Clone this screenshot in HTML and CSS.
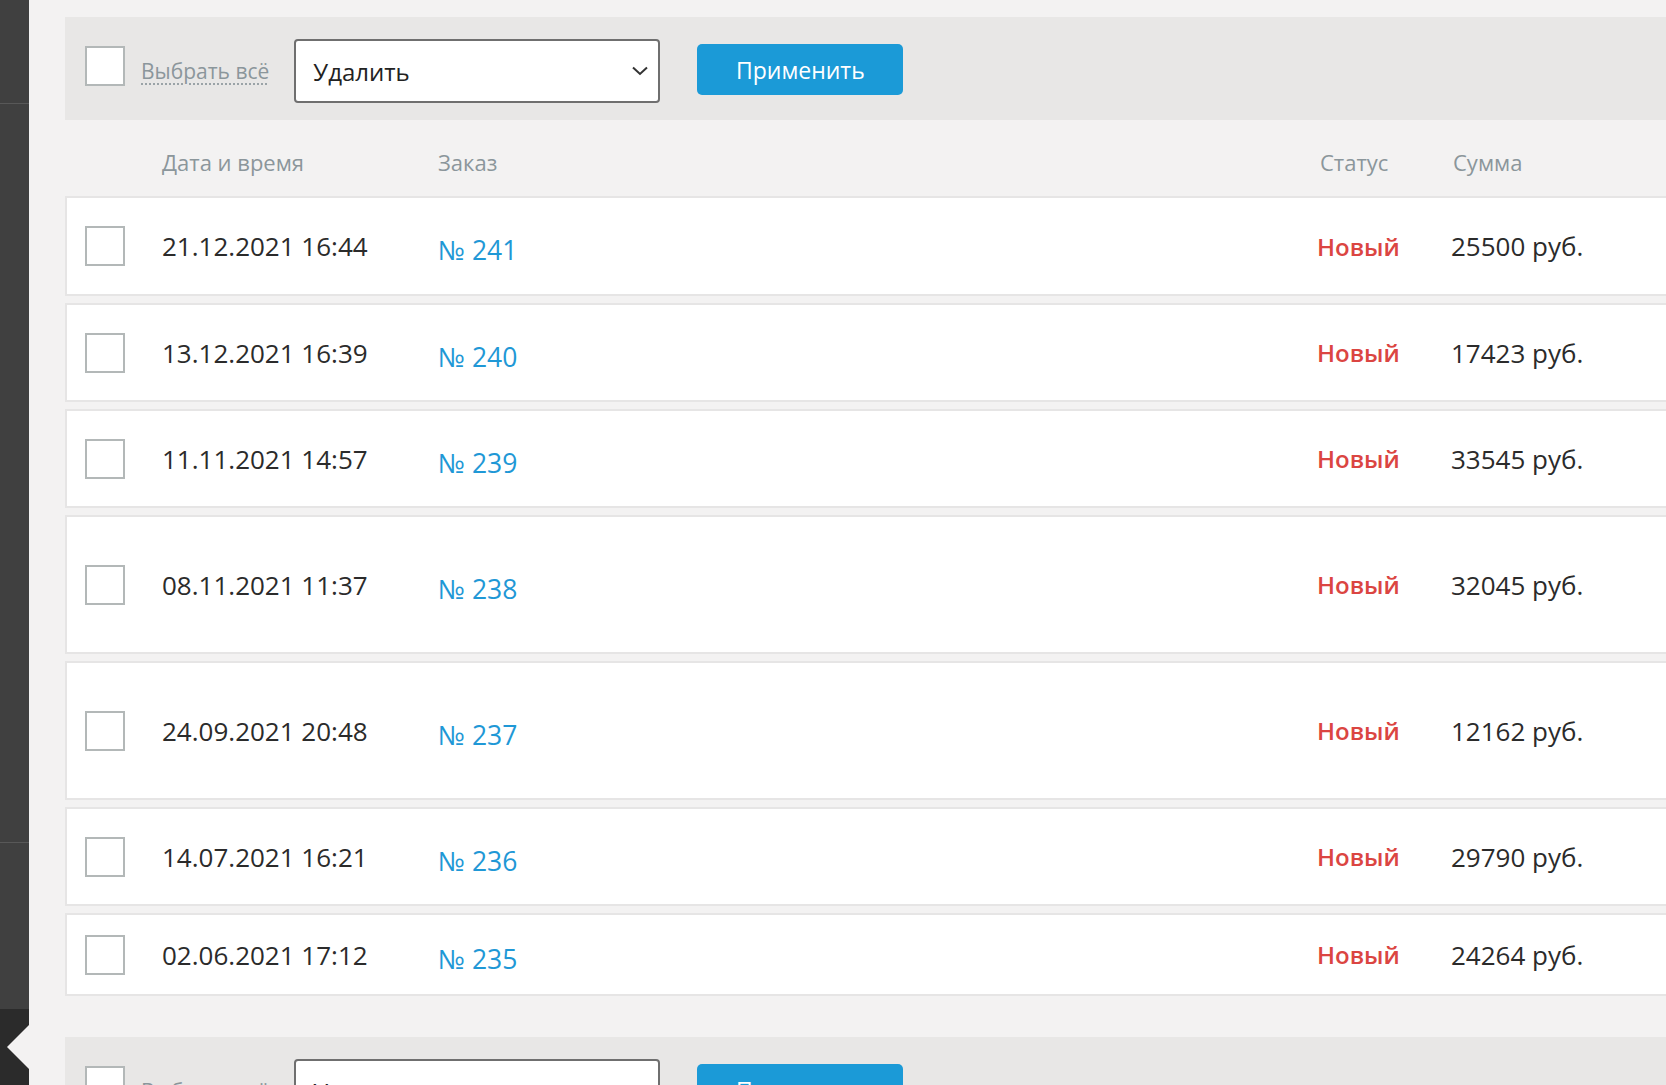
FILE: index.html
```html
<!DOCTYPE html>
<html lang="ru">
<head>
    <meta charset="UTF-8">
    <meta name="viewport" content="width=device-width, initial-scale=1.0">
    <title>Заказы</title>
    <link rel="stylesheet" href="styles.css">
</head>
<body>

<!-- Left admin sidebar (collapsed) -->
<div class="sidebar">
    <div class="sidebar-top"></div>
    <div class="sidebar-mid"></div>
    <div class="sidebar-low"></div>
    <div class="sidebar-bottom">
        <svg class="collapse-arrow" width="22" height="44" viewBox="0 0 22 44">
            <polygon points="22,0 0,22 22,44" fill="#f3f2f2"/>
        </svg>
    </div>
</div>

<div class="main">

    <!-- Bulk actions -->
    <div class="toolbar">
        <input type="checkbox" class="check toolbar-check">
        <span class="select-all">Выбрать всё</span>
        <div class="action-select">
            <span>Удалить</span>
            <svg width="16" height="10" viewBox="0 0 16 10">
                <polyline points="1,1.5 8,8 15,1.5" fill="none" stroke="#333" stroke-width="2"/>
            </svg>
        </div>
        <button class="apply-btn">Применить</button>
    </div>

    <div class="table-head">
        <span></span>
        <span>Дата и время</span>
        <span>Заказ</span>
        <span class="head-status">Статус</span>
        <span class="head-sum">Сумма</span>
    </div>

    <div class="orders">
        <div class="order-row">
            <input type="checkbox" class="check">
            <span class="date">21.12.2021 16:44</span>
            <a class="order-link" href="#">№ 241</a>
            <span class="status">Новый</span>
            <span class="sum">25500 руб.</span>
        </div>
        <div class="order-row">
            <input type="checkbox" class="check">
            <span class="date">13.12.2021 16:39</span>
            <a class="order-link" href="#">№ 240</a>
            <span class="status">Новый</span>
            <span class="sum">17423 руб.</span>
        </div>
        <div class="order-row">
            <input type="checkbox" class="check">
            <span class="date">11.11.2021 14:57</span>
            <a class="order-link" href="#">№ 239</a>
            <span class="status">Новый</span>
            <span class="sum">33545 руб.</span>
        </div>
        <div class="order-row order-row--tall">
            <input type="checkbox" class="check">
            <span class="date">08.11.2021 11:37</span>
            <a class="order-link" href="#">№ 238</a>
            <span class="status">Новый</span>
            <span class="sum">32045 руб.</span>
        </div>
        <div class="order-row order-row--tall">
            <input type="checkbox" class="check">
            <span class="date">24.09.2021 20:48</span>
            <a class="order-link" href="#">№ 237</a>
            <span class="status">Новый</span>
            <span class="sum">12162 руб.</span>
        </div>
        <div class="order-row">
            <input type="checkbox" class="check">
            <span class="date">14.07.2021 16:21</span>
            <a class="order-link" href="#">№ 236</a>
            <span class="status">Новый</span>
            <span class="sum">29790 руб.</span>
        </div>
        <div class="order-row order-row--short">
            <input type="checkbox" class="check">
            <span class="date">02.06.2021 17:12</span>
            <a class="order-link" href="#">№ 235</a>
            <span class="status">Новый</span>
            <span class="sum">24264 руб.</span>
        </div>
    </div>

    <!-- Bulk actions (bottom) -->
    <div class="toolbar toolbar--bottom">
        <input type="checkbox" class="check toolbar-check">
        <span class="select-all">Выбрать всё</span>
        <div class="action-select">
            <span>Удалить</span>
            <svg width="16" height="10" viewBox="0 0 16 10">
                <polyline points="1,1.5 8,8 15,1.5" fill="none" stroke="#333" stroke-width="2"/>
            </svg>
        </div>
        <button class="apply-btn">Применить</button>
    </div>

</div>

</body>
</html>
```

FILE: styles.css
```css
html,
body {
    margin: 0;
    height: 100%;
    overflow: hidden;
}

body {
    display: flex;
    font-family: "Open Sans", "Noto Sans", sans-serif;
    background: #f3f2f2;
    color: #2b2b2b;
}

/* sidebar */

.sidebar {
    width: 29px;
    flex-shrink: 0;
    display: flex;
    flex-direction: column;
    background: #404040;
}

.sidebar-top {
    height: 103px;
    border-bottom: 1px solid #585858;
}

.sidebar-mid {
    height: 738px;
    border-bottom: 1px solid #585858;
}

.sidebar-low {
    height: 166px;
}

.sidebar-bottom {
    flex: 1;
    background: #2b2b2b;
    display: flex;
    justify-content: flex-end;
    align-items: flex-start;
    padding-top: 16px;
}

.collapse-arrow {
    display: block;
}

/* main column */

.main {
    width: 1700px;
    flex-shrink: 0;
    padding: 17px 0 0 36px;
}

.toolbar {
    height: 103px;
    display: flex;
    align-items: flex-start;
    padding-left: 20px;
    background: #e8e7e6;
}

.toolbar--bottom {
    margin-top: 41px;
}

.check {
    appearance: none;
    -webkit-appearance: none;
    margin: 0;
    width: 40px;
    height: 40px;
    box-sizing: border-box;
    border: 2px solid #b3b8b8;
    background: #fff;
}

.toolbar-check {
    margin-top: 29px;
}

.select-all {
    margin: 40px 0 0 16px;
    font-size: 21px;
    line-height: 28px;
    color: #8b969b;
    text-decoration: underline dotted #9aa3a7;
    text-decoration-thickness: 2px;
    text-underline-offset: 4px;
}

.action-select {
    margin: 22px 0 0 25px;
    width: 366px;
    height: 64px;
    box-sizing: border-box;
    display: flex;
    align-items: center;
    justify-content: space-between;
    padding: 1px 10px 0 17px;
    border: 2px solid #6f6f6f;
    border-radius: 4px;
    background: #fff;
    font-size: 24px;
    color: #222;
}

.action-select svg {
    margin-top: -2px;
}

.apply-btn {
    margin: 27px 0 0 37px;
    width: 206px;
    height: 51px;
    border: none;
    border-radius: 5px;
    background: #1b9ad7;
    color: #fff;
    font-family: inherit;
    font-size: 23px;
    cursor: pointer;
}

/* table */

.table-head,
.order-row {
    display: grid;
    grid-template-columns: 77px 276px 879px 135px 1fr;
    align-items: center;
}

.table-head {
    height: 76px;
    box-sizing: border-box;
    padding: 27px 0 0 20px;
    align-items: start;
    font-size: 22px;
    line-height: 30px;
    color: #8b969b;
}

.head-status {
    padding-left: 3px;
}

.head-sum {
    padding-left: 1px;
}

.orders {
    display: flex;
    flex-direction: column;
    gap: 7px;
}

.order-row {
    height: 99px;
    box-sizing: border-box;
    padding-left: 18px;
    border: 2px solid #e6e5e5;
    background: #fff;
    font-size: 26px;
}

.order-row:first-child {
    height: 100px;
}

.order-row--tall {
    height: 139px;
}

.order-row--short {
    height: 83px;
}

.order-link {
    margin-top: 8px;
    font-size: 26.5px;
    color: #1f98d6;
    text-decoration: none;
}

.status {
    font-size: 24px;
    font-weight: 600;
    color: #db4542;
}

.sum {
    margin-left: -1px;
}
```
